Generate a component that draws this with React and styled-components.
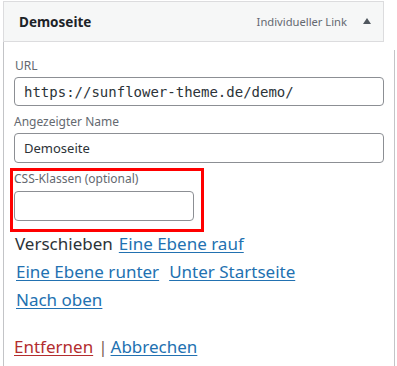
import React from "react";
import styled, { createGlobalStyle } from "styled-components";

const Global = createGlobalStyle`
  html, body { margin: 0; padding: 0; background: #fff; }
  body { font-family: "Noto Sans", "Open Sans", sans-serif; color: #2c3338; }
`;

const Wrap = styled.div`
  padding: 1px 0 0 3px;
  width: 392px;
`;

const Header = styled.div`
  width: 381px;
  height: 41px;
  box-sizing: border-box;
  display: flex;
  align-items: center;
  background: #f6f7f7;
  border: 1px solid #dcdcde;
  padding: 0 12px 0 15px;
`;

const Title = styled.span`
  flex: 1;
  font-weight: 700;
  font-size: 13.5px;
  color: #1d2327;
`;

const Type = styled.span`
  font-size: 11.2px;
  color: #646970;
  margin-right: 16px;
`;

const Arrow = styled.span`
  width: 0;
  height: 0;
  border-left: 4px solid transparent;
  border-right: 4px solid transparent;
  border-bottom: 6px solid #50575e;
  margin-bottom: 2px;
`;

const Body = styled.div`
  position: relative;
  border-left: 1px solid #c3c4c7;
  width: 392px;
  box-sizing: border-box;
  padding: 16px 0 9px 10px;
  height: 324px;
  &::after {
    content: "";
    position: absolute;
    right: 0;
    top: 8px;
    bottom: 0;
    border-right: 1px solid #c3c4c7;
  }
`;

const Field = styled.div`
  display: flex;
  flex-direction: column;
  width: ${p => p.$w}px;
  margin-bottom: ${p => p.$mb || 0}px;
`;

const Label = styled.label`
  font-size: 12px;
  line-height: 16px;
  color: #646970;
  margin-bottom: ${p => p.$mb ?? 3}px;
  padding-left: ${p => p.$pl || 0}px;
`;

const Input = styled.div`
  box-sizing: border-box;
  height: ${p => p.$h}px;
  border: 1px solid #8c8f94;
  border-radius: 4px;
  padding: 0 9px;
  display: flex;
  align-items: center;
  font-family: ${p => (p.$mono ? '"DejaVu Sans Mono", monospace' : '"Noto Sans", sans-serif')};
  font-size: ${p => (p.$mono ? "14px" : "13px")};
  color: #2c3338;
`;

const Highlight = styled.div`
  width: 194px;
  height: 64px;
  box-sizing: border-box;
  border: 3px solid #ff0000;
  margin-left: -4px;
  padding: 0 0 0 1px;
`;

const Row = styled.div`
  display: flex;
  font-size: 17px;
  line-height: ${p => p.$lh}px;
  margin-top: ${p => p.$mt || 0}px;
  gap: ${p => p.$gap}px;
  padding-left: ${p => p.$pl || 0}px;
`;

const Link = styled.a`
  color: ${p => (p.$danger ? "#b32d2e" : "#2271b1")};
  text-decoration: underline;
  text-underline-offset: 2px;
  cursor: pointer;
`;

const Actions = styled.div`
  font-size: 17px;
  line-height: 22px;
  margin-top: 22px;
  display: flex;
  gap: 3px;
  align-items: center;
`;

const Sep = styled.span`
  color: #7d5d52;
  margin-left: 2px;
`;

export default function App() {
  return (
    <>
      <Global />
      <Wrap>
        <Header>
          <Title>Demoseite</Title>
          <Type>Individueller Link</Type>
          <Arrow />
        </Header>
        <Body>
          <Field $w={370} $mb={8}>
            <Label $pl={1} $mb={3}>URL</Label>
            <Input $h={29} $mono>https://sunflower-theme.de/demo/</Input>
          </Field>
          <Field $w={370} $mb={5}>
            <Label $mb={3}>Angezeigter Name</Label>
            <Input $h={30}>Demoseite</Input>
          </Field>
          <Highlight>
            <Field $w={180}>
              <Label $mb={4}>CSS-Klassen (optional)</Label>
              <Input $h={30} />
            </Field>
          </Highlight>
          <Row $lh={24} $gap={6} $pl={1}>
            <span>Verschieben</span>
            <Link>Eine Ebene rauf</Link>
          </Row>
          <Row $lh={28} $mt={2} $gap={10} $pl={2}>
            <Link>Eine Ebene runter</Link>
            <Link>Unter Startseite</Link>
          </Row>
          <Row $lh={28} $gap={10} $pl={2}>
            <Link>Nach oben</Link>
          </Row>
          <Actions>
            <Link $danger>Entfernen</Link>
            <Sep>|</Sep>
            <Link>Abbrechen</Link>
          </Actions>
        </Body>
      </Wrap>
    </>
  );
}
